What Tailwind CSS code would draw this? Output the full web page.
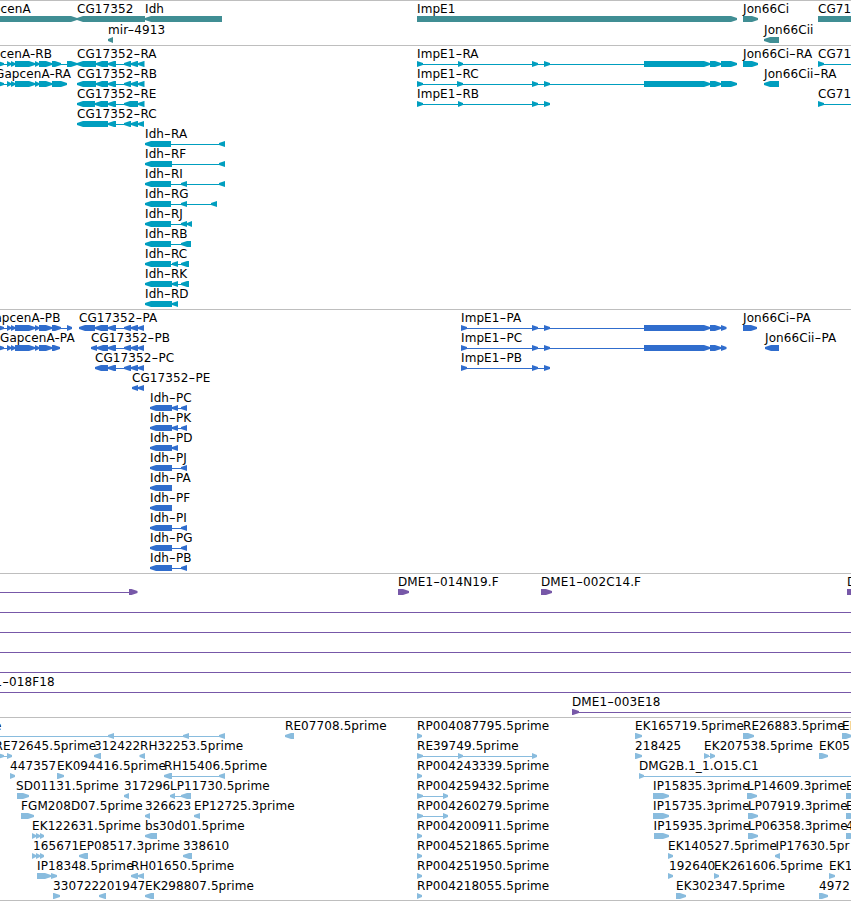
<!DOCTYPE html>
<html lang="en">
<head>
    <meta charset="UTF-8">
    <meta name="viewport" content="width=device-width, initial-scale=1.0">
    <title>Genome Browser</title>
    <script src="https://cdn.jsdelivr.net/npm/@tailwindcss/browser@4"></script>
</head>
<body class="bg-white overflow-hidden">
    <div class="flex flex-col w-[851px] h-[901px] overflow-hidden font-['DejaVu_Sans',sans-serif] text-[12px] tracking-[0.09px] text-black">
        <!-- Genes -->
        <div id="genes" class="flex flex-col gap-px h-[45px] border-t border-[#bebebe] text-[#408e94]"></div>
        <!-- Transcripts -->
        <div id="transcripts" class="flex flex-col h-[264px] border-t border-[#bebebe] text-[#009ebf]"></div>
        <!-- Proteins -->
        <div id="proteins" class="flex flex-col h-[264px] border-t border-[#bebebe] text-[#306dcd]"></div>
        <!-- Clones -->
        <div id="clones" class="flex flex-col h-[144px] border-t border-[#bebebe] text-[#7758a8]"></div>
        <!-- ESTs -->
        <div id="ests" class="flex flex-col h-[184px] border-y border-[#bebebe] text-[#89bcde]"></div>
    </div>

    <script>
        // each feature: [label x, label, strand, exon start, exon end, ...]
        const gap = [-4,4, 7,11, 11,15, 15,35, 35,39, 39,52];
        const imp = [532,538, 544,550];
        const impEnd = [644,710, 710,721];

        const tracks = {
            genes: [
                [[-24,'GapcenA','>',-20,77], [77,'CG17352','<',77,145], [145,'Idh','<',145,222], [417,'ImpE1','>',417,737], [743,'Jon66Ci','>',743,758], [818,'CG71','>',818,870]],
                [[108,'mir-4913','<',108,113], [764,'Jon66Cii','<',764,779]]
            ],
            transcripts: [
                [[-24.5,'GapcenA-RB','>',...gap,52,61,67,77], [77,'CG17352-RA','<',77,96,96,108,108,116,124,131,131,138,138,144.5], [417,'ImpE1-RA','>',417,423,458,463,...imp,...impEnd,721,737], [743,'Jon66Ci-RA','>',743,758], [818,'CG71','>',818,824,870,880]],
                [[-5,'GapcenA-RA','>',...gap,52,67], [77,'CG17352-RB','<',77,96,96,108,108,116,124,131,131,138,138,144.5], [417,'ImpE1-RC','>',417,423,457,463,...imp,...impEnd,721,737], [764,'Jon66Cii-RA','<',764,779]],
                [[77,'CG17352-RE','<',77,95,95,108,108,116,124,138,138,144.5], [417,'ImpE1-RB','>',417,423,458,463,...imp], [818,'CG71','>',818,824,870,880]],
                [[77,'CG17352-RC','<',77,108,108,116,124,131,131,138,138,144]],
                [[145,'Idh-RA','<',145,171,219,225]],
                [[145,'Idh-RF','<',145,172,219,225]],
                [[145,'Idh-RI','<',145,171,181,187,219,225]],
                [[145,'Idh-RG','<',145,171,181,187,211,217]],
                [[145,'Idh-RJ','<',145,171,181,187,187,192]],
                [[145,'Idh-RB','<',145,171,181,191]],
                [[145,'Idh-RC','<',145,171,172,178,181,189]],
                [[145,'Idh-RK','<',145,172,172,178,181,189]],
                [[145,'Idh-RD','<',145,172,172,178]]
            ],
            proteins: [
                [[-15,'GapcenA-PB','>',...gap,52,61,67,72], [79,'CG17352-PA','<',79,95,95,108,108,116,124,131,131,138,138,144], [461,'ImpE1-PA','>',461,467,...imp,...impEnd,721,726.5], [743,'Jon66Ci-PA','>',743,757]],
                [[0,'GapcenA-PA','>',...gap,52,60], [91,'CG17352-PB','<',91,97,97,108,108,116,124,131,131,138,138,144], [461,'ImpE1-PC','>',461,467,...imp,...impEnd,721,726.5], [765,'Jon66Cii-PA','<',765,779]],
                [[95,'CG17352-PC','<',95,108,108,116,124,131,131,138,138,144], [461,'ImpE1-PB','>',461,467,...imp]],
                [[132,'CG17352-PE','<',132,138,138,144]],
                [[150,'Idh-PC','<',150,172,172,178,181,187]],
                [[150,'Idh-PK','<',150,172,172,178,181,187]],
                [[150,'Idh-PD','<',150,172,172,178]],
                [[150,'Idh-PJ','<',150,172,181,187]],
                [[150,'Idh-PA','<',150,172]],
                [[150,'Idh-PF','<',150,172]],
                [[150,'Idh-PI','<',150,172,181,187]],
                [[150,'Idh-PG','<',150,172,181,187]],
                [[150,'Idh-PB','<',150,172,181,187]]
            ],
            clones: [
                [[0,'','>',-20,-10,129,137.5], [398,'DME1-014N19.F','>',398,409], [541,'DME1-002C14.F','>',541,552], [847,'D','>',847,860]],
                [[0,'','>',-20,-10,870,880]],
                [[0,'','>',-20,-10,870,880]],
                [[0,'','>',-20,-10,870,880]],
                [[0,'','>',-20,-10,870,880]],
                [[-33,'DME1-018F18','>',-20,-10,870,880]],
                [[572,'DME1-003E18','>',572,579,870,880]]
            ],
            ests: [
                [[-6,'e','<',-20,-10,108,114,183,189,219,225], [285,'RE07708.5prime','<',285,294], [417,'RP004087795.5prime','>',417,422], [635,'EK165719.5prime','>',635,642], [743,'RE26883.5prime','>',743,754], [842,'EK','>',842,852]],
                [[-5.5,'RE72645.5prime','>',-2,4,7,12], [94,'312422','<',94,101], [140,'RH32253.5prime','<',139.5,145], [417,'RE39749.5prime','>',417,423,458,463,532,537], [635,'218425','>',635,642], [704,'EK207538.5prime','>',704,709,710,715], [819,'EK05','>',819,828]],
                [[10,'447357','>',10,15], [57,'EK094416.5prime','>',57,64], [164,'RH15406.5prime','<',164,172,219,225], [417,'RP004243339.5prime','>',417,422], [639,'DMG2B.1_1.O15.C1','>',639,644,870,880]],
                [[16,'SD01131.5prime','>',17,29], [124,'317296','<',124,129], [170,'LP11730.5prime','<',170,175,181,191], [417,'RP004259432.5prime','>',417,423,443,448], [653,'IP15835.3prime','>',653,669], [747,'LP14609.3prime','>',747,757], [846,'E','>',846,856]],
                [[21,'FGM208D07.5prime','>',21,34], [145,'326623','<',145,150], [194,'EP12725.3prime','<',194,200], [417,'RP004260279.5prime','>',417,423,443,448], [653,'IP15735.3prime','>',653,669], [748,'LP07919.3prime','>',748,758], [846,'E','>',846,856]],
                [[32,'EK122631.5prime','>',32,36,36,40,40,44], [145,'bs30d01.5prime','<',145,157], [417,'RP004200911.5prime','>',417,422], [653.5,'IP15935.3prime','>',654,669], [748,'LP06358.3prime','>',748,758], [846,'4','>',846,856]],
                [[33,'165671','>',32,36,36,40,40,44], [79,'EP08517.3prime','<',79,88], [183,'338610','<',183,192], [417,'RP004521865.5prime','>',417,422], [668,'EK140527.5prime','>',668,673], [775.5,'IP17630.5pr','<',775,780]],
                [[37,'IP18348.5prime','>',37,51,51,57], [131,'RH01650.5prime','<',131,138,138,144], [417,'RP004251950.5prime','>',417,422], [669,'192640','>',668,673], [714,'EK261606.5prime','>',714,719], [829,'EK1','>',829,835]],
                [[53,'330722','>',53,60], [99,'201947','<',99,106], [145,'EK298807.5prime','<',145,154], [417,'RP004218055.5prime','>',417,422], [676,'EK302347.5prime','>',676,686], [819,'4972','>',819,828]]
            ]
        };

        // blunt arrow, bulging before the tip
        function exon(strand, a, b) {
            const head = Math.min(b - a, 6);
            if (strand === '>') {
                return `<path d="M${a} 15H${b - head}L${b - head / 2} 16L${b} 17V19L${b - head / 2} 20L${b - head} 21H${a}z"/>`;
            }
            return `<path d="M${b} 15H${a + head}L${a + head / 2} 16L${a} 17V19L${a + head / 2} 20L${a + head} 21H${b}z"/>`;
        }

        function label(x, text) {
            // wide dash, a bit tighter after an A
            const html = text.replace('-', `<tspan textLength="${text.includes('A-') ? 5.4 : 6.9}" lengthAdjust="spacingAndGlyphs">-</tspan>`);
            return `<text x="${x}" y="12" fill="#000">${html}</text>`;
        }

        for (const id in tracks) {
            document.getElementById(id).innerHTML = tracks[id].map(row => {
                let out = '';
                row.forEach(([x, text, strand, ...ex]) => {
                    out += `<path d="M${ex[0] + 1} 18H${ex[ex.length - 1] - 1}V19H${ex[0] + 1}z"/>`;
                    for (let i = 0; i < ex.length; i += 2) out += exon(strand, ex[i], ex[i + 1]);
                    if (text) out += label(x, text);
                });
                return `<svg class="block h-5 w-full shrink-0 overflow-visible" fill="currentColor">${out}</svg>`;
            }).join('');
        }
    </script>
</body>
</html>
